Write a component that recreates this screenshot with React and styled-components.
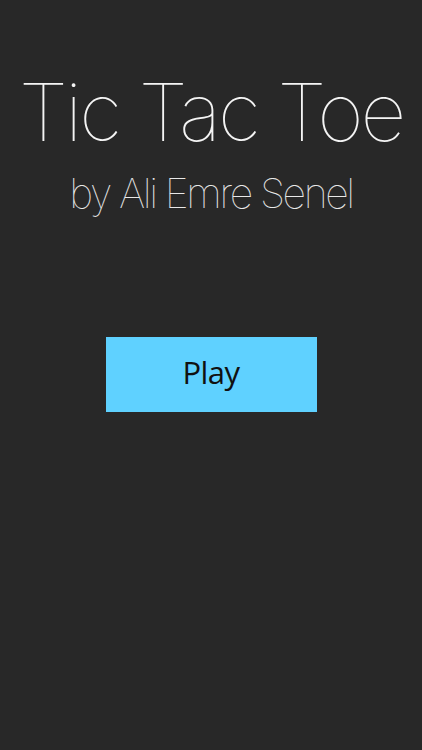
import React from 'react'
import styled, { createGlobalStyle } from 'styled-components'

const GlobalStyle = createGlobalStyle`
  html, body {
    margin: 0;
    padding: 0;
    background: #282828;
  }
`

export default function App() {
  return (
    <>
      <GlobalStyle />
      <Screen>
        <Header>
          <Title>Tic Tac Toe</Title>
          <Subtitle>by Ali Emre Senel</Subtitle>
        </Header>
        <PlayButton>Play</PlayButton>
      </Screen>
    </>
  )
}

const Screen = styled.div`
  width: 422px;
  height: 750px;
  background: #282828;
  display: flex;
  flex-direction: column;
  align-items: center;
  overflow: hidden;
`

const Header = styled.div`
  display: flex;
  flex-direction: column;
  align-items: center;
  padding-top: 64px;
`

const Title = styled.h1`
  margin: 0;
  font-family: Inter, "Lato", "Liberation Sans", sans-serif;
  font-weight: 100;
  font-size: 80px;
  line-height: 96px;
  letter-spacing: -3px;
  color: #f4f4f4;
  white-space: nowrap;
`

const Subtitle = styled.h2`
  margin: 9px 0 0;
  font-family: Inter, "Lato", "Liberation Sans", sans-serif;
  font-weight: 100;
  font-size: 41px;
  line-height: 48px;
  letter-spacing: -2.4px;
  color: #e8e8e8;
  white-space: nowrap;
`

const PlayButton = styled.button`
  margin-top: 120px;
  width: 211px;
  height: 75px;
  border: none;
  background: #5fd1ff;
  color: #111;
  font-family: "Open Sans", "Noto Sans", sans-serif;
  font-size: 31px;
  letter-spacing: -0.5px;
  padding: 0 0 5px;
  cursor: pointer;
`
